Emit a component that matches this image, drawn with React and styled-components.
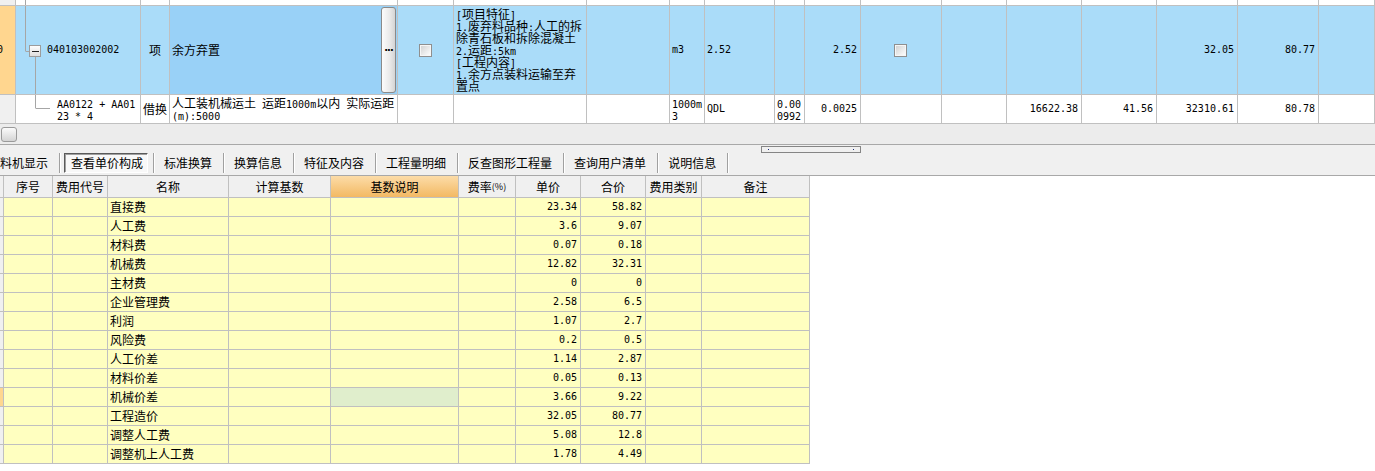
import React from "react";
import styled, { createGlobalStyle } from "styled-components";

const GlobalStyle = createGlobalStyle`
  html, body { margin: 0; padding: 0; background: #fff; }
  body {
    font-family: "Noto Sans CJK SC", "Noto Sans", sans-serif;
    font-size: 12px;
    color: #000;
  }
  * { box-sizing: border-box; }
`;

const TOP_COLS = "16px 125px 29px 228px 56px 133px 83px 35px 70px 30px 56px 81px 65px 75px 75px 81px 81px 56px";
const BOT_COLS = "4px 49px 55px 121px 102px 128px 57px 65px 65px 56px 108px";

const Page = styled.div`
  width: 1375px;
  height: 471px;
  overflow: hidden;
  display: flex;
  flex-direction: column;
  background: #fff;
`;

const TopGrid = styled.div`
  display: flex;
  flex-direction: column;
`;

const TopRow = styled.div`
  display: grid;
  grid-template-columns: ${TOP_COLS};
  height: ${p => p.$h}px;
  background: ${p => p.$bg || "#fff"};
`;

const Cell = styled.div`
  position: relative;
  display: flex;
  align-items: ${p => p.$valign || "center"};
  justify-content: ${p => (p.$align === "right" ? "flex-end" : p.$align === "center" ? "center" : "flex-start")};
  padding: 0 ${p => p.$pr ?? 3}px 0 ${p => p.$pl ?? 2}px;
  border-right: 1px solid #c0c0c0;
  border-bottom: 1px solid #c0c0c0;
  background: ${p => p.$bg || "transparent"};
  white-space: nowrap;
  overflow: hidden;
  line-height: 12px;
`;

const Num = styled.span`
  font-family: "DejaVu Sans Mono", "Liberation Mono", monospace;
  font-size: 10px;
  line-height: 12px;
  white-space: pre;
`;

const Peek = styled.div`
  height: 12px;
  margin-bottom: -10px;
`;

const Lines = styled.div`
  display: flex;
  flex-direction: column;
`;

const Line = styled.div`
  height: 12px;
  line-height: 12px;
  white-space: nowrap;
`;

const Tree = styled.svg`
  position: absolute;
  left: 0;
  top: 0;
`;

const DotsButton = styled.div`
  margin-left: auto;
  align-self: stretch;
  margin-top: 1px;
  margin-bottom: 1px;
  width: 15px;
  border: 1px solid #8a8a8a;
  border-radius: 3px;
  background: linear-gradient(90deg, #fcfcfc, #e9e9e9 60%, #d4d4d4);
  display: flex;
  align-items: center;
  justify-content: center;
  font-family: "DejaVu Sans", sans-serif;
  font-weight: bold;
  font-size: 10px;
  letter-spacing: -1px;
  padding-bottom: 4px;
`;

const Check = styled.div`
  width: 13px;
  height: 13px;
  border: 1px solid #8f8f8f;
  background: linear-gradient(135deg, #cfcfcf, #f2f2f2 70%, #fff);
  box-shadow: inset 0 0 0 1px #f6f6f6;
`;

const HScroll = styled.div`
  height: 20px;
  background: #ececec;
  display: flex;
  align-items: flex-start;
  padding: 3px 0 0 1px;
`;

const Thumb = styled.div`
  width: 16px;
  height: 15px;
  border: 1px solid #9a9a9a;
  border-radius: 3px;
  background: linear-gradient(#fbfbfb, #d4d4d4);
`;

const TabBar = styled.div`
  position: relative;
  height: 32px;
  border-top: 1px solid #a8a8a8;
  border-bottom: 1px solid #a8a8a8;
  background: #f0f0f0;
  display: flex;
  align-items: flex-start;
  padding-top: 8px;
`;

const Tab = styled.div`
  height: 20px;
  line-height: 20px;
  padding: 0 11px 0 ${p => (p.$first ? 0 : 9)}px;
  white-space: nowrap;
`;

const ActiveTab = styled.div`
  height: 20px;
  line-height: 18px;
  margin: 0 5px 0 3px;
  padding: 0 4px 0 6px;
  border: 1px solid;
  border-color: #5a5a5a #fff #fff #5a5a5a;
  box-shadow: inset 1px 1px 0 #a0a0a0;
  background: #f8f8f8;
  white-space: nowrap;
`;

const Sep = styled.div`
  width: 2px;
  height: 20px;
  border-left: 1px solid #a0a0a0;
  border-right: 1px solid #fff;
`;

const Splitter = styled.div`
  position: absolute;
  left: 761px;
  top: 1px;
  width: 100px;
  height: 7px;
  border: 1px solid #858585;
  background: #f0f0f0;
  display: flex;
  align-items: center;
  justify-content: space-between;
  padding: 0 6px;
`;

const Dot = styled.div`
  width: 1px;
  height: 1px;
  background: #1a2a7a;
`;

const BotGrid = styled.div`
  display: flex;
  flex-direction: column;
  width: 810px;
`;

const BotRow = styled.div`
  display: grid;
  grid-template-columns: ${BOT_COLS};
  height: ${p => p.$h}px;
`;

const HeadCell = styled.div`
  display: flex;
  align-items: center;
  justify-content: center;
  border-right: 1px solid #c0c0c0;
  border-bottom: 1px solid #c0c0c0;
  background: ${p => (p.$hot ? "linear-gradient(#fcdca8, #f3b963)" : "#f0f0f0")};
  white-space: nowrap;
  overflow: hidden;
`;

const Small = styled.span`
  font-size: 9px;
`;

const BodyCell = styled(Cell)`
  background: ${p => p.$bg || "#ffffc0"};
`;

const Mixed = ({ text }) =>
  text.split(/([\x20-\x7e]+)/).map((s, i) =>
    !s ? null : i % 2 === 1 ? <Num key={i}>{s}</Num> : <span key={i}>{s}</span>
  );

const LINE = "#a6a6a6";

const feature = [
  "[项目特征]",
  "1.废弃料品种:人工的拆",
  "除青石板和拆除混凝土",
  "2.运距:5km",
  "[工程内容]",
  "1.余方点装料运输至弃",
  "置点",
];

const costRows = [
  ["直接费", "23.34", "58.82"],
  ["人工费", "3.6", "9.07"],
  ["材料费", "0.07", "0.18"],
  ["机械费", "12.82", "32.31"],
  ["主材费", "0", "0"],
  ["企业管理费", "2.58", "6.5"],
  ["利润", "1.07", "2.7"],
  ["风险费", "0.2", "0.5"],
  ["人工价差", "1.14", "2.87"],
  ["材料价差", "0.05", "0.13"],
  ["机械价差", "3.66", "9.22"],
  ["工程造价", "32.05", "80.77"],
  ["调整人工费", "5.08", "12.8"],
  ["调整机上人工费", "1.78", "4.49"],
];

const tabs = ["标准换算", "换算信息", "特征及内容", "工程量明细", "反查图形工程量", "查询用户清单", "说明信息"];

function TopTable() {
  return (
    <TopGrid>
      <TopRow $h={6}>
        <Cell $bg="#f0f0f0" />
        <Cell>
          <Tree width="30" height="6">
            <line x1="9.5" y1="0" x2="9.5" y2="6" stroke={LINE} />
          </Tree>
        </Cell>
        <Cell $valign="flex-end" $align="center"><Peek><Num>m3</Num></Peek></Cell>
        <Cell $valign="flex-end"><Peek><Num>1 2m3 36.00m3.8</Num></Peek></Cell>
        {Array.from({ length: 14 }).map((_, i) => <Cell key={i} />)}
      </TopRow>

      <TopRow $h={89} $bg="#aadcf9">
        <Cell $bg="#ffd68f" $pl={0}><Num style={{ marginLeft: -3 }}>0</Num></Cell>
        <Cell $pl={31}>
          <Tree width="40" height="88">
            <line x1="9.5" y1="0" x2="9.5" y2="45" stroke={LINE} />
            <line x1="9.5" y1="45.5" x2="13" y2="45.5" stroke={LINE} />
            <defs>
              <linearGradient id="mb" x1="0" y1="0" x2="0" y2="1">
                <stop offset="0" stopColor="#ffffff" />
                <stop offset="1" stopColor="#dcdcdc" />
              </linearGradient>
            </defs>
            <rect x="13.5" y="39.5" width="11" height="11" fill="url(#mb)" stroke="#9c9c9c" />
            <line x1="16" y1="45.5" x2="23" y2="45.5" stroke="#222" />
            <line x1="19.5" y1="51" x2="19.5" y2="88" stroke={LINE} />
          </Tree>
          <Num>040103002002</Num>
        </Cell>
        <Cell $align="center" $pl={0} $pr={0}>项</Cell>
        <Cell $bg="#99d1f7" $pr={1}>
          余方弃置
          <DotsButton>...</DotsButton>
        </Cell>
        <Cell $align="center"><Check /></Cell>
        <Cell $pl={2}>
          <Lines>
            {feature.map(l => <Line key={l}><Mixed text={l} /></Line>)}
          </Lines>
        </Cell>
        <Cell />
        <Cell><Num>m3</Num></Cell>
        <Cell><Num>2.52</Num></Cell>
        <Cell />
        <Cell $align="right"><Num>2.52</Num></Cell>
        <Cell $align="center"><Check /></Cell>
        <Cell />
        <Cell />
        <Cell />
        <Cell $align="right"><Num>32.05</Num></Cell>
        <Cell $align="right"><Num>80.77</Num></Cell>
        <Cell />
      </TopRow>

      <TopRow $h={29}>
        <Cell $bg="#f0f0f0" />
        <Cell $pl={41}>
          <Tree width="40" height="28">
            <line x1="19.5" y1="0" x2="19.5" y2="13" stroke={LINE} />
            <line x1="19.5" y1="13.5" x2="34" y2="13.5" stroke={LINE} />
          </Tree>
          <Lines>
            <Line><Num>AA0122 + AA01</Num></Line>
            <Line><Num>23 * 4</Num></Line>
          </Lines>
        </Cell>
        <Cell $align="center" $pl={0} $pr={0}>借换</Cell>
        <Cell>
          <Lines>
            <Line><Mixed text="人工装机械运土 运距1000m以内 实际运距" /></Line>
            <Line><Num>(m):5000</Num></Line>
          </Lines>
        </Cell>
        <Cell />
        <Cell />
        <Cell />
        <Cell>
          <Lines>
            <Line><Num>1000m</Num></Line>
            <Line><Num>3</Num></Line>
          </Lines>
        </Cell>
        <Cell><Num>QDL</Num></Cell>
        <Cell>
          <Lines>
            <Line><Num>0.00</Num></Line>
            <Line><Num>0992</Num></Line>
          </Lines>
        </Cell>
        <Cell $align="right"><Num>0.0025</Num></Cell>
        <Cell />
        <Cell />
        <Cell $align="right"><Num>16622.38</Num></Cell>
        <Cell $align="right"><Num>41.56</Num></Cell>
        <Cell $align="right"><Num>32310.61</Num></Cell>
        <Cell $align="right"><Num>80.78</Num></Cell>
        <Cell />
      </TopRow>
    </TopGrid>
  );
}

function Tabs() {
  return (
    <TabBar>
      <Tab $first>料机显示</Tab>
      <Sep />
      <ActiveTab>查看单价构成</ActiveTab>
      {tabs.map(t => (
        <React.Fragment key={t}>
          <Sep />
          <Tab>{t}</Tab>
        </React.Fragment>
      ))}
      <Sep />
      <Splitter>
        <Dot />
        <Dot />
      </Splitter>
    </TabBar>
  );
}

function CostTable() {
  return (
    <BotGrid>
      <BotRow $h={22}>
        <HeadCell />
        <HeadCell>序号</HeadCell>
        <HeadCell>费用代号</HeadCell>
        <HeadCell>名称</HeadCell>
        <HeadCell>计算基数</HeadCell>
        <HeadCell $hot>基数说明</HeadCell>
        <HeadCell>费率<Small>(%)</Small></HeadCell>
        <HeadCell>单价</HeadCell>
        <HeadCell>合价</HeadCell>
        <HeadCell>费用类别</HeadCell>
        <HeadCell>备注</HeadCell>
      </BotRow>
      {costRows.map(([name, price, total], i) => {
        const active = i === 10;
        return (
          <BotRow key={name} $h={19}>
            <BodyCell $pl={0} $pr={0} $bg={active ? "#ffd68f" : "#f0f0f0"} />
            <BodyCell />
            <BodyCell />
            <BodyCell>{name}</BodyCell>
            <BodyCell />
            <BodyCell $bg={active ? "#e0eecc" : undefined} />
            <BodyCell />
            <BodyCell $align="right"><Num>{price}</Num></BodyCell>
            <BodyCell $align="right"><Num>{total}</Num></BodyCell>
            <BodyCell />
            <BodyCell />
          </BotRow>
        );
      })}
    </BotGrid>
  );
}

export default function App() {
  return (
    <>
      <GlobalStyle />
      <Page>
        <TopTable />
        <HScroll>
          <Thumb />
        </HScroll>
        <Tabs />
        <CostTable />
      </Page>
    </>
  );
}
